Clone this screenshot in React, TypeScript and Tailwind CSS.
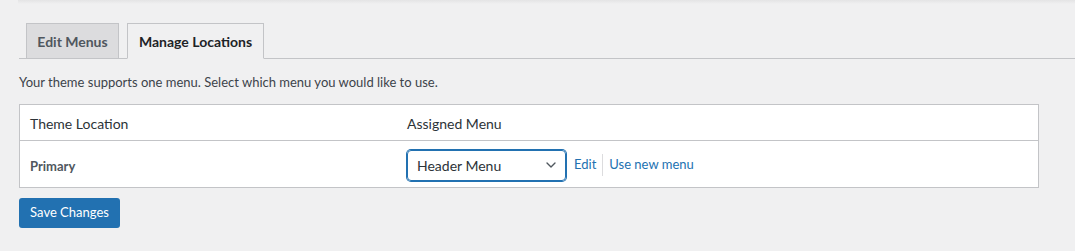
import { ChevronDown } from "lucide-react";

export default function App() {
  return (
    <div
      className="h-[251px] w-full overflow-hidden bg-[#f0f0f1] text-[#3c434a]"
      style={{ fontFamily: 'Lato, "Noto Sans", sans-serif' }}
    >
      {/* shadow from the box above */}
      <div className="ml-[18px] h-[4px] bg-gradient-to-b from-[#e4e4e5] to-[#f0f0f1]" />

      {/* tabs */}
      <nav className="ml-[19px] mt-[19px] flex h-[36px] items-end gap-2 border-b border-[#c3c4c7] pl-[7px]">
        <span className="-mb-px flex h-[36px] w-[93px] items-center justify-center border border-[#c3c4c7] bg-[#dcdcde] text-[14px] font-bold text-[#50575e]">
          Edit Menus
        </span>
        <span className="-mb-px flex h-[36px] w-[137px] items-center justify-center border border-[#c3c4c7] border-b-[#f0f0f1] bg-[#f0f0f1] text-[14px] font-bold text-[#1d2327]">
          Manage Locations
        </span>
      </nav>

      <div className="pl-[19px] pr-[36px]">
        <p className="mt-[13px] text-[13px] leading-[20px]">
          Your theme supports one menu. Select which menu you would like to use.
        </p>

        <div className="mt-[12px] border border-[#c3c4c7] bg-white">
          <div className="flex h-[36px] items-center border-b border-[#c3c4c7] pt-px text-[14px] text-[#2c3338]">
            <span className="w-[387px] pl-[10px]">Theme Location</span>
            <span>Assigned Menu</span>
          </div>
          <div className="flex h-[46px] items-center pt-[2px] text-[13px]">
            <span className="w-[387px] pl-[10px] pt-[3px] font-bold text-[#50575e]">
              Primary
            </span>
            <div className="flex items-center">
              <div className="flex h-[31px] w-[159px] items-center justify-between rounded-[4px] border border-[#2271b1] pl-[9px] pr-[6px] text-[14px] text-[#2c3338] shadow-[0_0_0_1px_#2271b1]">
                <span>Header Menu</span>
                <ChevronDown size={16} strokeWidth={2} className="text-[#50575e]" />
              </div>
              <a className="ml-[8px] text-[#2271b1]">Edit</a>
              <span className="mx-[6px] h-[22px] w-px bg-[#dcdcde]" />
              <a className="text-[#2271b1]">Use new menu</a>
            </div>
          </div>
        </div>

        <button className="mt-[10px] h-[30px] w-[101px] rounded-[3px] bg-[#2271b1] text-[13px] text-white">
          Save Changes
        </button>
      </div>
    </div>
  );
}
